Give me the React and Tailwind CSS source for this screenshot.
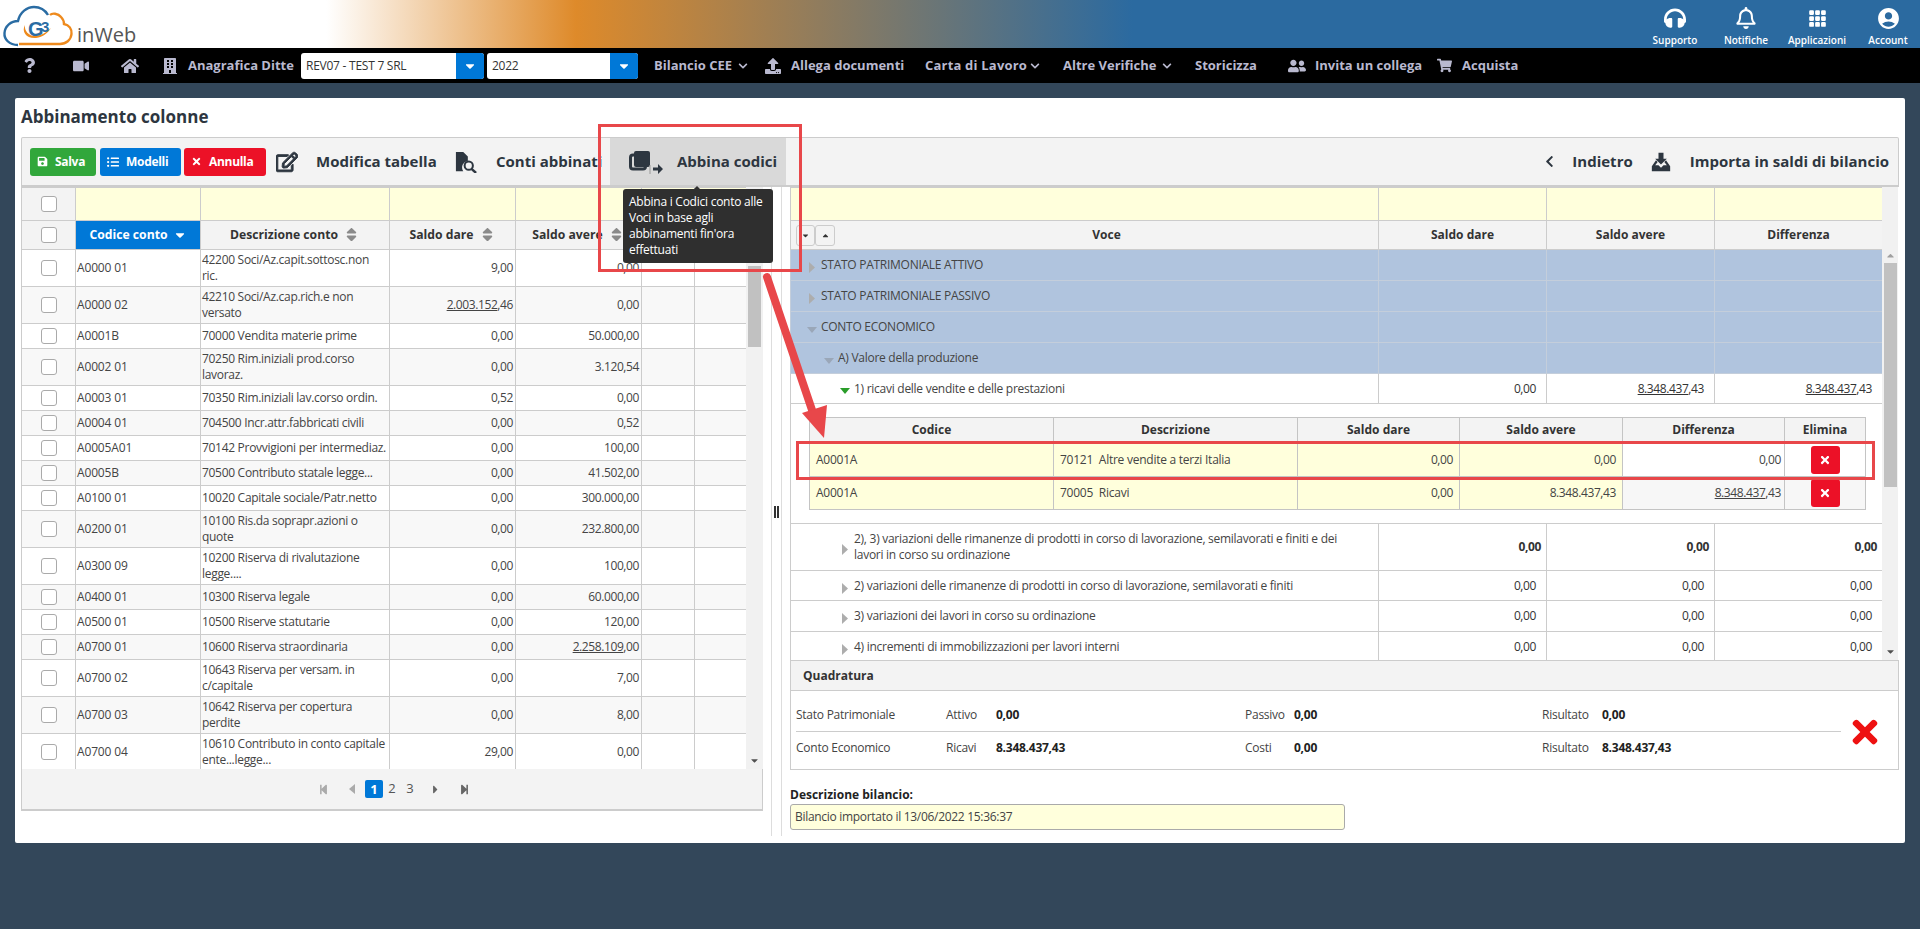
import React from 'react';
import { FaQuestion, FaVideo, FaHome, FaBuilding, FaChevronDown, FaChevronLeft, FaUpload, FaUserFriends, FaShoppingCart, FaSave, FaListUl, FaTimes, FaRegEdit, FaHeadphones, FaRegBell, FaSort, FaCaretDown, FaCaretRight, FaCaretUp, FaStepBackward, FaStepForward } from 'react-icons/fa';
import { BsGrid3X3GapFill } from 'react-icons/bs';
import { MdAccountCircle } from 'react-icons/md';

const leftRows = [
  ['A0000 01', '42200 Soci/Az.capit.sottosc.non\nric.', '9,00', '0,00', 37],
  ['A0000 02', '42210 Soci/Az.cap.rich.e non\nversato', <><u>2.003.152</u>,46</>, '0,00', 37],
  ['A0001B', '70000 Vendita materie prime', '0,00', '50.000,00', 25],
  ['A0002 01', '70250 Rim.iniziali prod.corso\nlavoraz.', '0,00', '3.120,54', 37],
  ['A0003 01', '70350 Rim.iniziali lav.corso ordin.', '0,52', '0,00', 25],
  ['A0004 01', '704500 Incr.attr.fabbricati civili', '0,00', '0,52', 25],
  ['A0005A01', '70142 Provvigioni per intermediaz.', '0,00', '100,00', 25],
  ['A0005B', '70500 Contributo statale legge...', '0,00', '41.502,00', 25],
  ['A0100 01', '10020 Capitale sociale/Patr.netto', '0,00', '300.000,00', 25],
  ['A0200 01', '10100 Ris.da soprapr.azioni o\nquote', '0,00', '232.800,00', 37],
  ['A0300 09', '10200 Riserva di rivalutazione\nlegge....', '0,00', '100,00', 37],
  ['A0400 01', '10300 Riserva legale', '0,00', '60.000,00', 25],
  ['A0500 01', '10500 Riserve statutarie', '0,00', '120,00', 25],
  ['A0700 01', '10600 Riserva straordinaria', '0,00', <><u>2.258.109</u>,00</>, 25],
  ['A0700 02', '10643 Riserva per versam. in\nc/capitale', '0,00', '7,00', 37],
  ['A0700 03', '10642 Riserva per copertura\nperdite', '0,00', '8,00', 37],
  ['A0700 04', '10610 Contributo in conto capitale\nente...legge...', '29,00', '0,00', 37],
];

function Check() {
  return <span className="block w-4 h-4 mx-auto rounded-[3px] border border-[#aaaaaa] bg-white" />;
}

function Logo() {
  return (
    <svg width="76" height="48" viewBox="0 0 76 48" fill="none">
      <path d="M18 45 C9 45 4 39 4.500 33 C5 26 11 21 18 21 C20 12 27 7 34 7 C40 7 45 10 48 15" stroke="#2a6ca3" strokeWidth="2.4" />
      <path d="M50 15 C52 13 58 13 61 17 C63 19 64 22 64 24 C69 25 72 29 71.500 34 C71 40 66 44 60 44 L19 44" stroke="#ee8a1d" strokeWidth="2.4" />
      <path d="M25 25 C21 32 27 39 36 38 C43 37 48 33 51 28 C47 32 41 36 35 36 C29 36 24 31 25 25 Z" fill="#ee8a1d" />
      <text x="28" y="36" fontSize="20" fontWeight="700" fill="#2a6ca3" fontFamily="'Liberation Sans', sans-serif">G</text>
      <text x="41" y="32" fontSize="15" fontWeight="700" fill="#2a6ca3" fontFamily="'Liberation Sans', sans-serif">3</text>
    </svg>
  );
}

function TopIcon({ icon, label }) {
  return (
    <div className="w-16 flex flex-col items-center text-white">
      <div className="h-[33px] flex items-center justify-center pt-[3px]">{icon}</div>
      <div className="text-[10px] leading-[14px] font-semibold whitespace-nowrap">{label}</div>
    </div>
  );
}

function SelectBox({ width, btn, text }) {
  return (
    <div className={`${width} h-[26px] flex rounded-[3px] overflow-hidden bg-white`}>
      <div className="flex-1 text-[12px] tracking-[-0.25px] leading-[26px] pl-[5px] text-[#333] font-normal whitespace-nowrap">{text}</div>
      <div className={`${btn} bg-[#0078d7] flex items-center justify-center text-white`}><FaCaretDown size={14} /></div>
    </div>
  );
}

function Btn({ color, icon, label, width }) {
  return (
    <button className={`${color} ${width} h-7 rounded-[3px] text-white text-[12px] tracking-[-0.3px] font-bold flex items-center justify-start pl-[7px] gap-[7px]`}>
      {icon}<span>{label}</span>
    </button>
  );
}

function SortTh({ children, active }) {
  return (
    <th className={`border border-[#cccccc] font-bold text-[12.2px] ${active ? 'bg-[#0078d7] text-white' : 'bg-[#f3f3f3] text-[#333]'}`}>
      <span className="inline-flex items-center gap-[5px]">
        {children}
        {active ? <FaCaretDown size={14} /> : <FaSort size={17} className="text-[#8a8a8a]" />}
      </span>
    </th>
  );
}

function TreeRow({ indent, arrow, label, blue, values, h, bold }) {
  const bg = blue ? 'bg-[#b0c4de]' : 'bg-white';
  const border = blue ? 'border-[#c4cedb]' : 'border-[#cccccc]';
  return (
    <tr className={bg}>
      <td className={`border ${border} text-[12px] tracking-[-0.27px] leading-4 text-[#444] ${h}`}>
        <div className={`flex items-center ${indent}`}>
          <span className="w-[11px] shrink-0 flex justify-start mt-[5px]">{arrow}</span>
          <span className="pr-3">{label}</span>
        </div>
      </td>
      {[0, 1, 2].map((i) => (
        <td key={i} className={`border ${border} text-right text-[12px] tracking-[-0.4px] text-[#333] ${bold ? 'font-bold pr-[5px]' : 'pr-[10px]'}`}>{values ? values[i] : ''}</td>
      ))}
    </tr>
  );
}

const caretGray = <svg width="6" height="11" viewBox="0 0 6 11" className="-ml-[1px]"><path d="M0 0 L6 5.500 L0 11 Z" fill="#adadad" /></svg>;
const caretDown = <svg width="10" height="6" viewBox="0 0 10 6" className="-ml-[3px] shrink-0"><path d="M0 0 H10 L5 6 Z" fill="#9aa7b8" /></svg>;
const caretGreen = <svg width="10" height="6" viewBox="0 0 10 6" className="-ml-[3px] shrink-0"><path d="M0 0 H10 L5 6 Z" fill="#2a9d2a" /></svg>;

function SubRow({ code, desc, avere, diff, white, h }) {
  const yellow = 'bg-[#ffffdc] border border-[#c4c4c4] text-[12px] text-[#444]';
  return (
    <tr className={h}>
      <td className={`${yellow} pl-[6px] tracking-[-0.25px]`}>{code}</td>
      <td className={`${yellow} pl-[6px] tracking-[-0.25px] whitespace-pre`}>{desc}</td>
      <td className={`${yellow} text-right pr-[6px] tracking-[-0.4px]`}>0,00</td>
      <td className={`${yellow} text-right pr-[6px] tracking-[-0.4px]`}>{avere}</td>
      <td className={`${white ? 'bg-white' : 'bg-[#f7f7f7]'} border border-[#c4c4c4] text-[12px] tracking-[-0.4px] text-[#444] text-right pr-[3px]`}>{diff}</td>
      <td className={`${white ? 'bg-white' : 'bg-[#f7f7f7]'} border border-[#c4c4c4]`}>
        <span className="mx-auto w-[29px] h-7 rounded-[3px] bg-[#ec1127] text-white flex items-center justify-center"><FaTimes size={12} /></span>
      </td>
    </tr>
  );
}

function Scrollbar({ thumb, top, w }) {
  return (
    <div className={`${w} bg-[#f1f1f1] flex flex-col items-center`}>
      <FaCaretUp size={11} className={`text-[#a0a0a0] ${top}`} />
      <div className={`w-[13px] bg-[#c1c1c1] ${thumb}`} />
      <div className="flex-1" />
      <FaCaretDown size={11} className="text-[#505050] mb-[3px]" />
    </div>
  );
}

function QuadRow({ name, a, av, b, bv, rv, h }) {
  return (
    <div className={`flex items-center text-[12px] tracking-[-0.25px] text-[#444] ${h}`}>
      <span className="w-[150px]">{name}</span>
      <span className="w-[50px]">{a}</span>
      <span className="w-[249px] font-bold text-[#222]">{av}</span>
      <span className="w-[49px]">{b}</span>
      <span className="w-[248px] font-bold text-[#222]">{bv}</span>
      <span className="w-[60px]">Risultato</span>
      <span className="font-bold text-[#222]">{rv}</span>
    </div>
  );
}

export default function App() {
  return (
    <div className="relative w-[1920px] h-[929px] overflow-hidden bg-[#33475a] font-['Open_Sans',sans-serif] text-[#333]">
      {/* top bar */}
      <div className="h-12 flex justify-between bg-[linear-gradient(90deg,#ffffff_17%,#de8a2a_30%,#2b6aa0_59%)]">
        <div className="flex items-end">
          <Logo />
          <span className="text-[20px] leading-[26px] text-[#555] font-normal ml-[1px]">inWeb</span>
        </div>
        <div className="flex gap-[7px]">
          <TopIcon icon={<FaHeadphones size={22} />} label="Supporto" />
          <TopIcon icon={<FaRegBell size={22} />} label="Notifiche" />
          <TopIcon icon={<BsGrid3X3GapFill size={19} />} label="Applicazioni" />
          <TopIcon icon={<MdAccountCircle size={25} />} label="Account" />
        </div>
      </div>

      {/* nav */}
      <div className="h-[35px] bg-black flex items-center text-[13px] font-bold text-[#b9b9cf] whitespace-nowrap">
        <FaQuestion size={15} className="ml-[22px]" />
        <FaVideo size={16} className="ml-[36px]" />
        <FaHome size={18} className="ml-[32px]" />
        <FaBuilding size={16} className="ml-[23px]" />
        <span className="ml-[10px] w-[106px]">Anagrafica Ditte</span>
        <div className="ml-[7px]"><SelectBox width="w-[183px]" btn="w-7" text="REV07 - TEST 7 SRL" /></div>
        <div className="ml-[3px]"><SelectBox width="w-[151px]" btn="w-7" text="2022" /></div>
        <span className="ml-4 w-[79px]">Bilancio CEE</span>
        <FaChevronDown size={10} className="ml-[5px]" />
        <FaUpload size={16} className="ml-[17px]" />
        <span className="ml-[10px] w-[115px]">Allega documenti</span>
        <span className="ml-[19px] w-[100px] tracking-[0.2px]">Carta di Lavoro</span>
        <FaChevronDown size={10} className="ml-[5px]" />
        <span className="ml-[23px] w-[94px]">Altre Verifiche</span>
        <FaChevronDown size={10} className="ml-[5px]" />
        <span className="ml-[23px] w-[63px]">Storicizza</span>
        <FaUserFriends size={18} className="ml-[30px]" />
        <span className="ml-[9px] w-[110px]">Invita un collega</span>
        <FaShoppingCart size={15} className="ml-[12px]" />
        <span className="ml-[10px]">Acquista</span>
      </div>

      {/* card */}
      <div className="mt-[15px] ml-[15px] w-[1890px] h-[745px] bg-white rounded-[2px] pl-[6px] pr-[6px]">
        <h1 className="h-[39px] pt-[7px] text-[17px] leading-6 font-bold text-[#2d3640]">Abbinamento colonne</h1>

        {/* toolbar */}
        <div className="w-[1878px] h-[50px] bg-[#f3f3f3] border border-[#cccccc] border-b-2 rounded-t-[2px] flex items-center text-[15px] font-bold text-[#2d3640] whitespace-nowrap">
          <div className="ml-[8px]"><Btn color="bg-[#31a73b]" width="w-[66px]" icon={<FaSave size={11} />} label="Salva" /></div>
          <div className="ml-[4px]"><Btn color="bg-[#0078d7]" width="w-[81px]" icon={<FaListUl size={12} />} label="Modelli" /></div>
          <div className="ml-[3px]"><Btn color="bg-[#ec1127]" width="w-[82px]" icon={<FaTimes size={11} />} label="Annulla" /></div>
          <FaRegEdit size={22} stroke="currentColor" strokeWidth={24} className="ml-[10px]" />
          <span className="ml-[18px] w-[122px]">Modifica tabella</span>
          <svg width="24" height="22" viewBox="0 0 24 24" className="ml-[16px]">
            <path d="M1 1 H9 L14 6 V11 A7 7 0 0 0 9 22 H1 Z" fill="#2d3640" />
            <circle cx="15" cy="16" r="4.500" fill="none" stroke="#2d3640" strokeWidth="2.200" />
            <path d="M18 19.500 L23 24" stroke="#2d3640" strokeWidth="2.600" />
          </svg>
          <span className="ml-[18px] w-[106px]">Conti abbinati</span>
          <div className="ml-[8px] w-[176px] h-full bg-[#d9d9d9] flex items-center">
            <svg width="34" height="24" viewBox="0 0 34 24" className="ml-[19px]">
              <rect x="1.500" y="5" width="15" height="14" rx="2.500" fill="none" stroke="#2d3640" strokeWidth="3" />
              <rect x="5" y="1" width="16" height="16" rx="2" fill="#2d3640" />
              <path d="M21 15 V24" stroke="#999" strokeWidth="1" />
              <path d="M24 17.500 H29 V14 L34 19 L29 24 V20.500 H24 Z" fill="#2d3640" />
            </svg>
            <span className="ml-[14px]">Abbina codici</span>
          </div>
          <div className="flex-1" />
          <FaChevronLeft size={13} className="mr-[16px]" />
          <span>Indietro</span>
          <svg width="22" height="20" viewBox="0 0 22 24" className="ml-[17px] mr-[18px]">
            <path d="M8 1 H14 V8 H18 L11 15 L4 8 H8 Z" fill="#2d3640" />
            <path d="M5 10 L0 17 V23 H22 V17 L17 10 L15 12 L18 16 H14 L11 19 L8 16 H4 L7 12 Z" fill="#2d3640" />
          </svg>
          <span className="mr-[9px]">Importa in saldi di bilancio</span>
        </div>

        <div className="flex w-[1878px]">
          {/* left panel */}
          <div className="w-[742px] shrink-0">
            <div className="flex h-[582px]">
              <div className="w-[725px] h-full overflow-hidden">
                <table className="table-fixed border-collapse w-[725px]">
                  <colgroup>
                    <col className="w-[54px]" /><col className="w-[125px]" /><col className="w-[189px]" /><col className="w-[126px]" /><col className="w-[126px]" /><col className="w-[53px]" /><col className="w-[52px]" />
                  </colgroup>
                  <thead>
                    <tr className="h-[33px]">
                      <td className="border border-[#cccccc] bg-[#f3f3f3]"><Check /></td>
                      {[0, 1, 2, 3, 4, 5].map((i) => <td key={i} className="border border-[#cccccc] bg-[#ffffdc]" />)}
                    </tr>
                    <tr className="h-[29px]">
                      <td className="border border-[#cccccc] bg-[#f3f3f3]"><Check /></td>
                      <SortTh active>Codice conto</SortTh>
                      <SortTh>Descrizione conto</SortTh>
                      <SortTh>Saldo dare</SortTh>
                      <SortTh>Saldo avere</SortTh>
                      <th className="border border-[#cccccc] bg-[#f3f3f3]" />
                      <th className="border border-[#cccccc] bg-[#f3f3f3]" />
                    </tr>
                  </thead>
                  <tbody className="text-[12px] leading-4 text-[#444]">
                    {leftRows.map((r, i) => (
                      <tr key={r[0]} className={`${i % 2 ? 'bg-[#f8f8f8]' : 'bg-white'} ${r[4] === 37 ? 'h-[37px]' : 'h-[25px]'}`}>
                        <td className="border border-[#cccccc]"><Check /></td>
                        <td className="border border-[#cccccc] pl-[1px] tracking-[-0.15px]">{r[0]}</td>
                        <td className="border border-[#cccccc] pl-[1px] tracking-[-0.3px] whitespace-pre-line">{r[1]}</td>
                        <td className="border border-[#cccccc] text-right pr-[2px] tracking-[-0.4px]">{r[2]}</td>
                        <td className="border border-[#cccccc] text-right pr-[2px] tracking-[-0.4px]">{r[3]}</td>
                        <td className="border border-[#cccccc]" />
                        <td className="border border-[#cccccc]" />
                      </tr>
                    ))}
                  </tbody>
                </table>
              </div>
              <Scrollbar w="w-[17px]" top="mt-[62px] opacity-0" thumb="h-[81px] mt-[6px]" />
            </div>
            <div className="h-[42px] pl-[4px] bg-[#f3f3f3] border border-[#cccccc] border-t-0 border-b-2 flex items-center justify-center text-[13px] text-[#555]">
              <FaStepBackward size={11} className="text-[#aaaaaa]" />
              <FaCaretLeftIcon />
              <span className="w-[18px] h-[18px] ml-[9px] bg-[#0078d7] text-white rounded-[2px] font-bold text-center leading-[18px]">1</span>
              <span className="w-[18px] text-center">2</span>
              <span className="w-[18px] text-center">3</span>
              <FaCaretRight size={13} className="ml-[10px] text-[#666]" />
              <FaStepForward size={11} className="ml-[17px] text-[#666]" />
            </div>
          </div>

          {/* splitter */}
          <div className="w-[27px] shrink-0 flex justify-center">
            <div className="w-[11px] h-[649px] border-x border-[#dddddd] flex items-center justify-center text-[#333]">
              <div className="w-[5px] h-[12px] border-x-2 border-[#333]" />
            </div>
          </div>

          {/* right panel */}
          <div className="w-[1109px] shrink-0">
            <div className="flex h-[473px]">
              <div className="w-[1092px] h-full overflow-hidden">
                <table className="table-fixed border-collapse w-[1092px]">
                  <colgroup>
                    <col className="w-[588px]" /><col className="w-[168px]" /><col className="w-[168px]" /><col className="w-[168px]" />
                  </colgroup>
                  <thead>
                    <tr className="h-[33px]">
                      {[0, 1, 2, 3].map((i) => <td key={i} className="border border-[#cccccc] bg-[#ffffdc]" />)}
                    </tr>
                    <tr className="h-[29px] bg-[#f3f3f3] text-[12px] font-bold text-[#333]">
                      <th className="border border-[#cccccc] font-bold">
                        <div className="flex items-center pl-[5px]">
                          <span className="w-[19px] h-[21px] border border-[#cccccc] rounded-[3px] flex items-center justify-center"><FaCaretDown size={9} /></span>
                          <span className="w-[20px] h-[21px] border border-[#cccccc] rounded-[3px] flex items-center justify-center"><FaCaretUp size={9} /></span>
                          <span className="flex-1 text-center">Voce</span>
                        </div>
                      </th>
                      <th className="border border-[#cccccc] font-bold">Saldo dare</th>
                      <th className="border border-[#cccccc] font-bold">Saldo avere</th>
                      <th className="border border-[#cccccc] font-bold">Differenza</th>
                    </tr>
                  </thead>
                  <tbody>
                    <TreeRow blue h="h-[31px]" indent="pl-[19px]" arrow={caretGray} label="STATO PATRIMONIALE ATTIVO" />
                    <TreeRow blue h="h-[31px]" indent="pl-[19px]" arrow={caretGray} label="STATO PATRIMONIALE PASSIVO" />
                    <TreeRow blue h="h-[31px]" indent="pl-[19px]" arrow={caretDown} label="CONTO ECONOMICO" />
                    <TreeRow blue h="h-[31px]" indent="pl-[36px]" arrow={caretDown} label="A) Valore della produzione" />
                    <TreeRow h="h-[30px]" indent="pl-[52px]" arrow={caretGreen} label="1) ricavi delle vendite e delle prestazioni" values={['0,00', <><u>8.348.437</u>,43</>, <><u>8.348.437</u>,43</>]} />
                    <tr className="bg-white">
                      <td colSpan={4} className="border border-[#cccccc] h-[120px] pl-[18px]">
                        <table className="table-fixed border-collapse w-[1056px]">
                          <colgroup>
                            <col className="w-[244px]" /><col className="w-[244px]" /><col className="w-[162px]" /><col className="w-[163px]" /><col className="w-[162px]" /><col className="w-[81px]" />
                          </colgroup>
                          <thead>
                            <tr className="h-[25px] bg-[#f3f3f3] text-[12px] font-bold text-[#333]">
                              {['Codice', 'Descrizione', 'Saldo dare', 'Saldo avere', 'Differenza', 'Elimina'].map((t) => (
                                <th key={t} className="border border-[#c4c4c4] font-bold">{t}</th>
                              ))}
                            </tr>
                          </thead>
                          <tbody>
                            <SubRow h="h-[34px]" code="A0001A" desc="70121  Altre vendite a terzi Italia" avere="0,00" diff="0,00" white />
                            <SubRow h="h-[33px]" code="A0001A" desc="70005  Ricavi" avere="8.348.437,43" diff={<><u>8.348.437</u>,43</>} />
                          </tbody>
                        </table>
                      </td>
                    </tr>
                    <TreeRow h="h-[47px]" indent="pl-[52px]" arrow={caretGray} label="2), 3) variazioni delle rimanenze di prodotti in corso di lavorazione, semilavorati e finiti e dei lavori in corso su ordinazione" values={['0,00', '0,00', '0,00']} bold />
                    <TreeRow h="h-[30px]" indent="pl-[52px]" arrow={caretGray} label="2) variazioni delle rimanenze di prodotti in corso di lavorazione, semilavorati e finiti" values={['0,00', '0,00', '0,00']} />
                    <TreeRow h="h-[31px]" indent="pl-[52px]" arrow={caretGray} label="3) variazioni dei lavori in corso su ordinazione" values={['0,00', '0,00', '0,00']} />
                    <TreeRow h="h-[30px]" indent="pl-[52px]" arrow={caretGray} label="4) incrementi di immobilizzazioni per lavori interni" values={['0,00', '0,00', '0,00']} />
                  </tbody>
                </table>
              </div>
              <Scrollbar w="w-[16px]" top="mt-[63px]" thumb="h-[224px] mt-[2px]" />
            </div>

            <div className="border border-[#cccccc] h-[110px]">
              <div className="h-[30px] bg-[#f3f3f3] border-b border-[#cccccc] text-[12px] font-bold leading-[30px] pl-[12px] text-[#333]">Quadratura</div>
              <div className="relative pl-[5px] pt-[8px]">
                <QuadRow h="h-8" name="Stato Patrimoniale" a="Attivo" av="0,00" b="Passivo" bv="0,00" rv="0,00" />
                <div className="w-[1045px] h-px bg-[#cccccc]" />
                <QuadRow h="h-[31px]" name="Conto Economico" a="Ricavi" av="8.348.437,43" b="Costi" bv="0,00" rv="8.348.437,43" />
                <FaTimes size={36} className="absolute right-[15px] top-[23px] text-[#ee1111]" />
              </div>
            </div>

            <div className="mt-[17px] text-[12px] leading-4 font-bold text-[#222]">Descrizione bilancio:</div>
            <div className="w-[555px] h-[26px] mt-[1px] bg-[#ffffdc] border border-[#aaaaaa] rounded-[3px] text-[12px] tracking-[-0.3px] leading-[24px] pl-[4px] text-[#444]">Bilancio importato il 13/06/2022 15:36:37</div>
          </div>
        </div>
      </div>

      {/* tooltip */}
      <div className="absolute left-[623px] top-[189px] w-[150px] h-[74px] bg-[#2f2f2f] rounded-[3px] text-white text-[12px] tracking-[-0.25px] leading-4 pl-[6px] pr-[6px] pt-[5px]">
        <div className="absolute left-[71px] -top-[3px] w-0 h-0 border-x-[3px] border-x-transparent border-b-[3px] border-b-[#2f2f2f]" />
        Abbina i Codici conto alle Voci in base agli abbinamenti fin'ora effettuati
      </div>

      {/* annotation rectangles */}
      <div className="absolute left-[598px] top-[124px] w-[204px] h-[148px] border-[3px] border-[#e8474a]" />
      <div className="absolute left-[796px] top-[441px] w-[1079px] h-[39px] border-[3px] border-[#e8474a]" />

      {/* annotation arrow */}
      <svg className="absolute left-0 top-0 pointer-events-none" width="1920" height="929" viewBox="0 0 1920 929">
        <path d="M767 277 L812 410" stroke="#e8474a" strokeWidth="8" strokeLinecap="round" fill="none" />
        <path d="M827 405 L824 438 L802 413 Z" fill="#e8474a" />
      </svg>
    </div>
  );
}

function FaCaretLeftIcon() {
  return (
    <svg width="8" height="12" viewBox="0 0 8 12" className="ml-[19px] text-[#aaaaaa]"><path d="M7 1 L1 6 L7 11 Z" fill="currentColor" /></svg>
  );
}
